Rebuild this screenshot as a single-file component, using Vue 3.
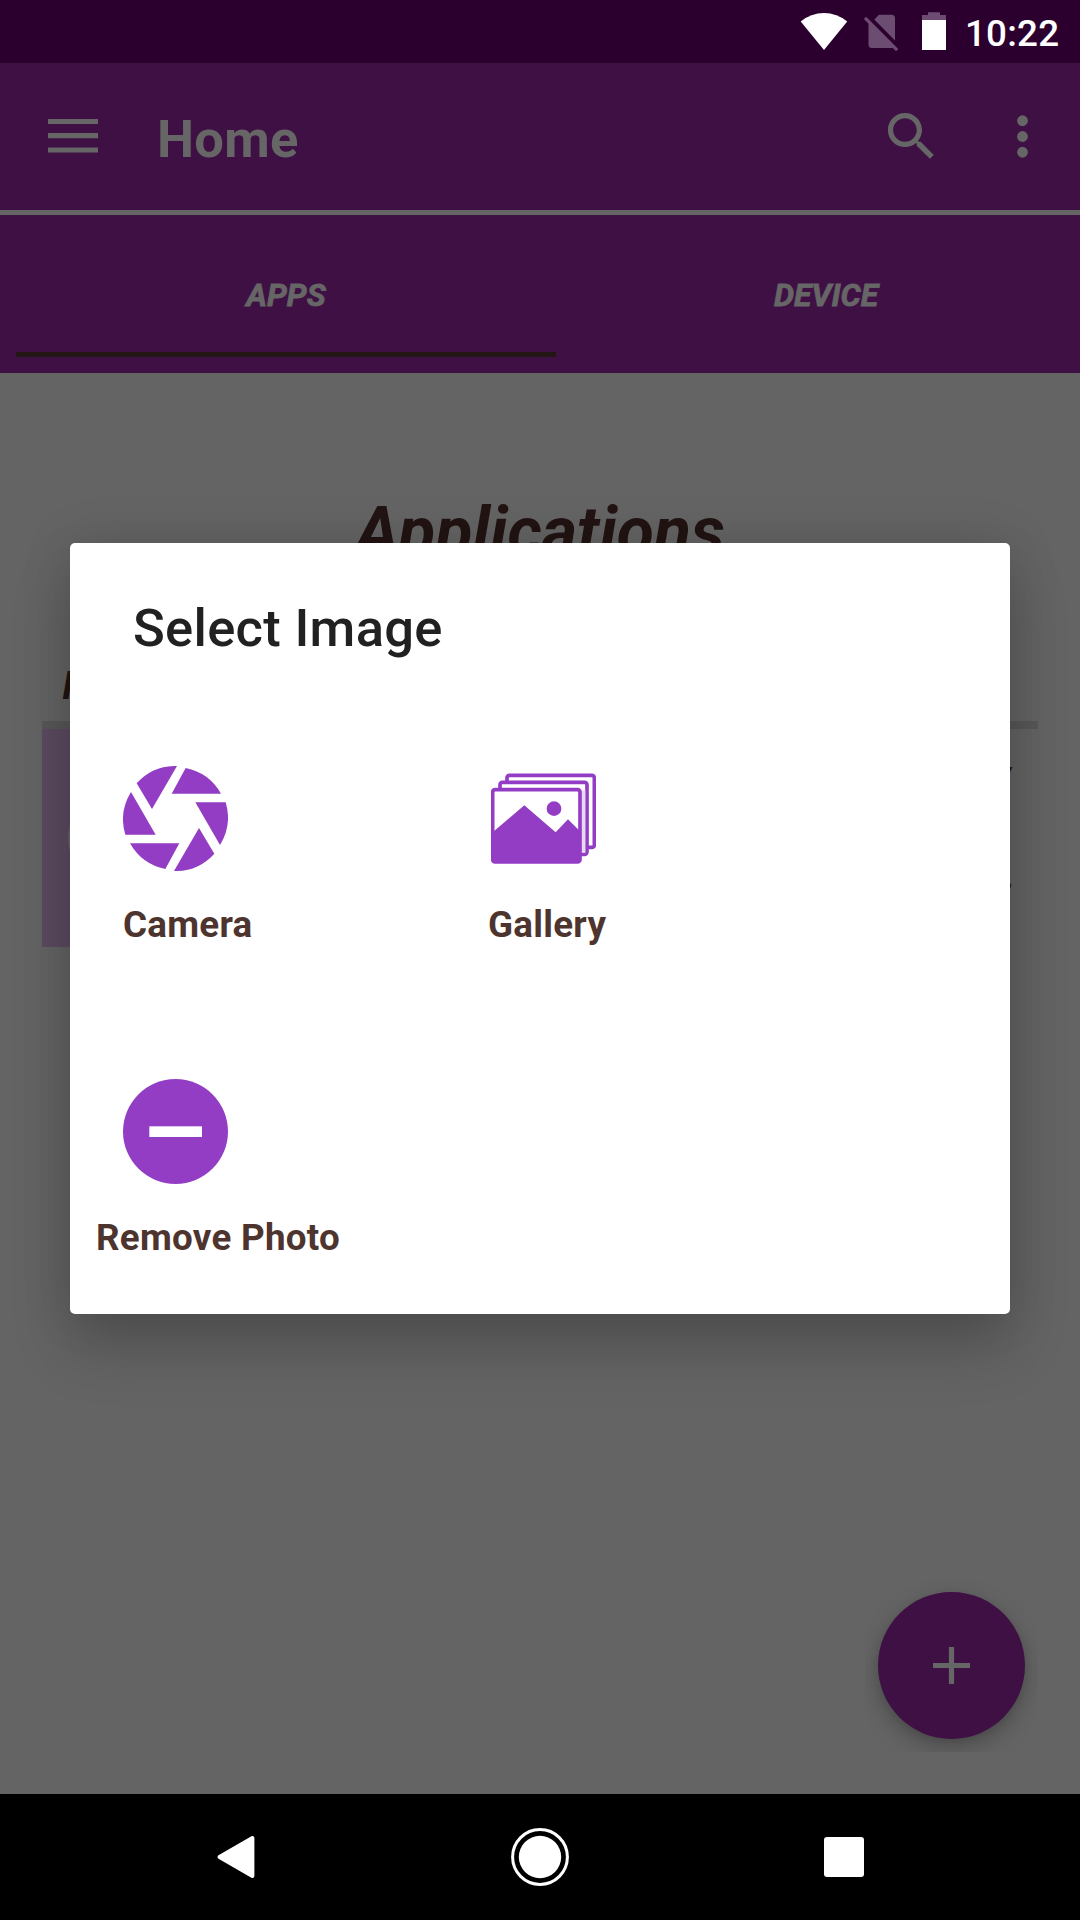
<script setup>
const tabs = [
  { label: 'APPS', active: true },
  { label: 'DEVICE', active: false },
]
</script>

<template>
  <div class="screen">
    <header class="status">
      <svg class="status-icons" width="160" height="63" viewBox="796 0 160 63">
        <path d="M800.7 21.5Q811 13 824 13T847.2 21.5L824 50Z" fill="#fff" />
        <path d="M879 14.7h12.5q3.5 0 3.5 3.5V40.5L874.3 19.5ZM868.5 21.5L895 48H872q-3.5 0-3.5-3.5Z" fill="#6c4c70" />
        <path d="M865 17.8l32.2 32.4" stroke="#6c4c70" stroke-width="3.2" />
        <path d="M922 20v-5h6v-2.7h12V15h6v5Z" fill="#6c4c70" />
        <path d="M922 20h24v30h-24Z" fill="#fff" />
      </svg>
      <span class="clock">10:22</span>
    </header>

    <div class="appbar">
      <svg class="menu" width="50" height="36" viewBox="0 0 50 36">
        <path d="M0 3.5h50M0 17.7h50M0 32h50" stroke="#666" stroke-width="5.2" />
      </svg>
      <h1>Home</h1>
      <svg class="search" width="63" height="63" viewBox="0 0 24 24">
        <path fill="#666" d="M15.5 14h-.79l-.28-.27C15.41 12.59 16 11.11 16 9.5 16 5.91 13.09 3 9.5 3S3 5.91 3 9.5 5.91 16 9.5 16c1.61 0 3.09-.59 4.23-1.57l.27.28v.79l5 4.99L20.49 19l-4.99-5zm-6 0C7.01 14 5 11.99 5 9.5S7.01 5 9.5 5 14 7.01 14 9.5 11.99 14 9.5 14z" />
      </svg>
      <svg class="more" width="63" height="63" viewBox="0 0 24 24">
        <g fill="#666"><circle cx="12" cy="6" r="2.05" /><circle cx="12" cy="12" r="2.05" /><circle cx="12" cy="18" r="2.05" /></g>
      </svg>
    </div>

    <nav class="tabs">
      <div v-for="t in tabs" :key="t.label" class="tab" :class="{ active: t.active }">{{ t.label }}</div>
    </nav>

    <main class="content">
      <h2>Applications</h2>
      <div class="group">Image</div>
      <div class="rule"></div>
      <div class="row">
        <div class="thumb"><span class="avatar"></span></div>
        <div class="info"><span>APP V</span><span class="note">L</span></div>
      </div>
      <div class="fab-area">
        <div class="fab">
          <svg width="37" height="37" viewBox="0 0 37 37"><path d="M0 18.5h37M18.5 0v37" stroke="#666" stroke-width="5.2" /></svg>
        </div>
      </div>
    </main>

    <footer class="navbar">
      <svg width="1080" height="126" viewBox="0 1794 1080 126">
        <path d="M252.4 1838v38L219.5 1857Z" fill="#fff" stroke="#fff" stroke-width="4" stroke-linejoin="round" />
        <circle cx="540" cy="1857" r="27.4" fill="none" stroke="#fff" stroke-width="3" />
        <circle cx="540" cy="1857" r="21.2" fill="#fff" />
        <rect x="824" y="1837" width="40" height="40" rx="3" fill="#fff" />
      </svg>
    </footer>

    <div class="overlay">
      <section class="dialog">
        <h3>Select Image</h3>
        <div class="options">
          <div class="option">
            <svg class="icon" viewBox="0 0 315 315" fill="#933dc5">
              <path d="M162 0L87 129L41 52A157.5 157.5 0 0 1 162 0ZM188 6L146 83H294A157.5 157.5 0 0 0 188 6ZM217 109H308A157.5 157.5 0 0 1 291 237Z" />
              <path d="M153 315L228 186L274 263A157.5 157.5 0 0 1 153 315ZM127 309L169 232H21A157.5 157.5 0 0 0 127 309ZM98 206H7A157.5 157.5 0 0 1 24 78Z" />
            </svg>
            <span class="label camera">Camera</span>
          </div>
          <div class="option second">
            <svg class="icon" viewBox="0 -23 315 315">
              <g fill="#fff" stroke="#933dc5" stroke-width="11">
                <rect x="48" y="5" width="262" height="216" rx="7" />
                <rect x="27" y="26" width="261" height="216" rx="7" />
                <rect x="272" y="50" width="11" height="187" fill="#e9d8f3" stroke="none" />
                <rect x="5" y="48" width="262" height="217" rx="7" />
              </g>
              <path d="M5 176L100 95L194 176L231 137L267 173V262H5Z" fill="#933dc5" />
              <circle cx="189" cy="105" r="22" fill="#933dc5" />
            </svg>
            <span class="label gallery">Gallery</span>
          </div>
          <div class="option">
            <svg class="icon" viewBox="0 0 315 315">
              <circle cx="157.5" cy="157.5" r="157.5" fill="#933dc5" />
              <rect x="79" y="142" width="158" height="32" fill="#fff" />
            </svg>
            <span class="label remove">Remove Photo</span>
          </div>
        </div>
      </section>
    </div>
  </div>
</template>

<style>
body { margin: 0; }
</style>

<style scoped>
.screen {
  position: relative;
  width: 1080px;
  height: 1920px;
  overflow: hidden;
  display: flex;
  flex-direction: column;
  background: #646464;
  font-family: Roboto, "Liberation Sans", sans-serif;
}
h1, h2, h3 { margin: 0; }
svg { display: block; flex: none; }
.status {
  flex: none;
  height: 63px;
  background: #2b002f;
  color: #fff;
  display: flex;
  justify-content: flex-end;
  padding-right: 20px;
}
.clock {
  width: 95px;
  margin-left: 9px;
  font-size: 36.75px;
  line-height: 67px;
  font-weight: 500;
  letter-spacing: .2px;
  white-space: nowrap;
}
.appbar {
  flex: none;
  height: 147px;
  background: #3f1044;
  display: flex;
  align-items: center;
  padding-left: 48px;
}
.menu { margin-bottom: 2px; }
h1 {
  flex: 1;
  margin-left: 59px;
  color: #666;
  font-size: 52.5px;
  line-height: 60px;
  font-weight: 700;
  letter-spacing: .3px;
  padding-top: 4px;
}
.more { margin-left: 48px; margin-right: 26px; }
.tabs {
  flex: none;
  box-sizing: border-box;
  margin-top: 5px;
  height: 158px;
  padding: 0 0 16px 16px;
  background: #3f1044;
  display: flex;
}
.tab {
  flex: none;
  box-sizing: border-box;
  width: 540px;
  padding-top: 60px;
  color: #666;
  font-size: 31.8px;
  line-height: 40px;
  font-weight: 700;
  font-style: italic;
  text-align: center;
  -webkit-text-stroke: .8px #666;
  border-bottom: 5px solid transparent;
}
.tab.active { border-color: #221714; }
.content {
  flex: 1;
  display: flex;
  flex-direction: column;
  color: #211412;
  font-weight: 700;
  font-style: italic;
}
h2 {
  margin-top: 119px;
  font-size: 68px;
  line-height: 80px;
  text-align: center;
}
.group {
  margin: 91px 0 0 62px;
  height: 58px;
  font-size: 39.4px;
  line-height: 46px;
}
.rule { height: 8px; margin: 0 42px; background: #585858; }
.row { height: 218px; margin: 0 42px; display: flex; }
.thumb {
  width: 240px;
  background: #5c4b61;
  display: flex;
  align-items: center;
  padding-left: 26px;
}
.avatar { width: 90px; height: 90px; border-radius: 50%; background: #666; }
.info {
  flex: 1;
  padding: 30px 28px 0 0;
  display: flex;
  flex-direction: column;
  gap: 52px;
  text-align: right;
  font-size: 36.75px;
  line-height: 43px;
}
.note { margin-right: -3px; }
.fab-area {
  margin: auto 42px 42px auto;
  padding: 13px;
  overflow: hidden;
}
.fab {
  width: 147px;
  height: 147px;
  border-radius: 50%;
  background: #3f1044;
  display: flex;
  align-items: center;
  justify-content: center;
  box-shadow: 0 8px 22px rgba(0, 0, 0, .26), 0 2px 6px rgba(0, 0, 0, .06);
}
.navbar { flex: none; height: 126px; background: #000; z-index: 2; }
.overlay {
  position: absolute;
  inset: 63px 0 126px;
  display: flex;
  align-items: center;
  justify-content: center;
}
.dialog {
  box-sizing: border-box;
  width: 940px;
  height: 771px;
  border-radius: 5px;
  background: #fff;
  box-shadow: 0 34px 60px rgba(0, 0, 0, .19), 0 0 52px rgba(0, 0, 0, .12);
}
h3 {
  margin: 54px 0 0 63px;
  color: #212121;
  font-size: 52.5px;
  line-height: 62px;
  font-weight: 500;
  letter-spacing: .3px;
}
.options {
  display: grid;
  grid-template-columns: 366px 366px;
  grid-auto-rows: 313px;
  margin-top: 107px;
  padding-left: 26px;
}
.option { display: flex; flex-direction: column; align-items: flex-start; }
.icon { width: 105px; height: 105px; margin-left: 27px; }
.second .icon { margin-left: 29px; }
.label {
  margin-top: 32px;
  color: #4e342e;
  font-size: 36.75px;
  line-height: 43px;
  font-weight: 700;
  letter-spacing: .27px;
  white-space: nowrap;
}
.camera { margin-left: 27px; }
.gallery { margin-left: 26px; }
</style>
